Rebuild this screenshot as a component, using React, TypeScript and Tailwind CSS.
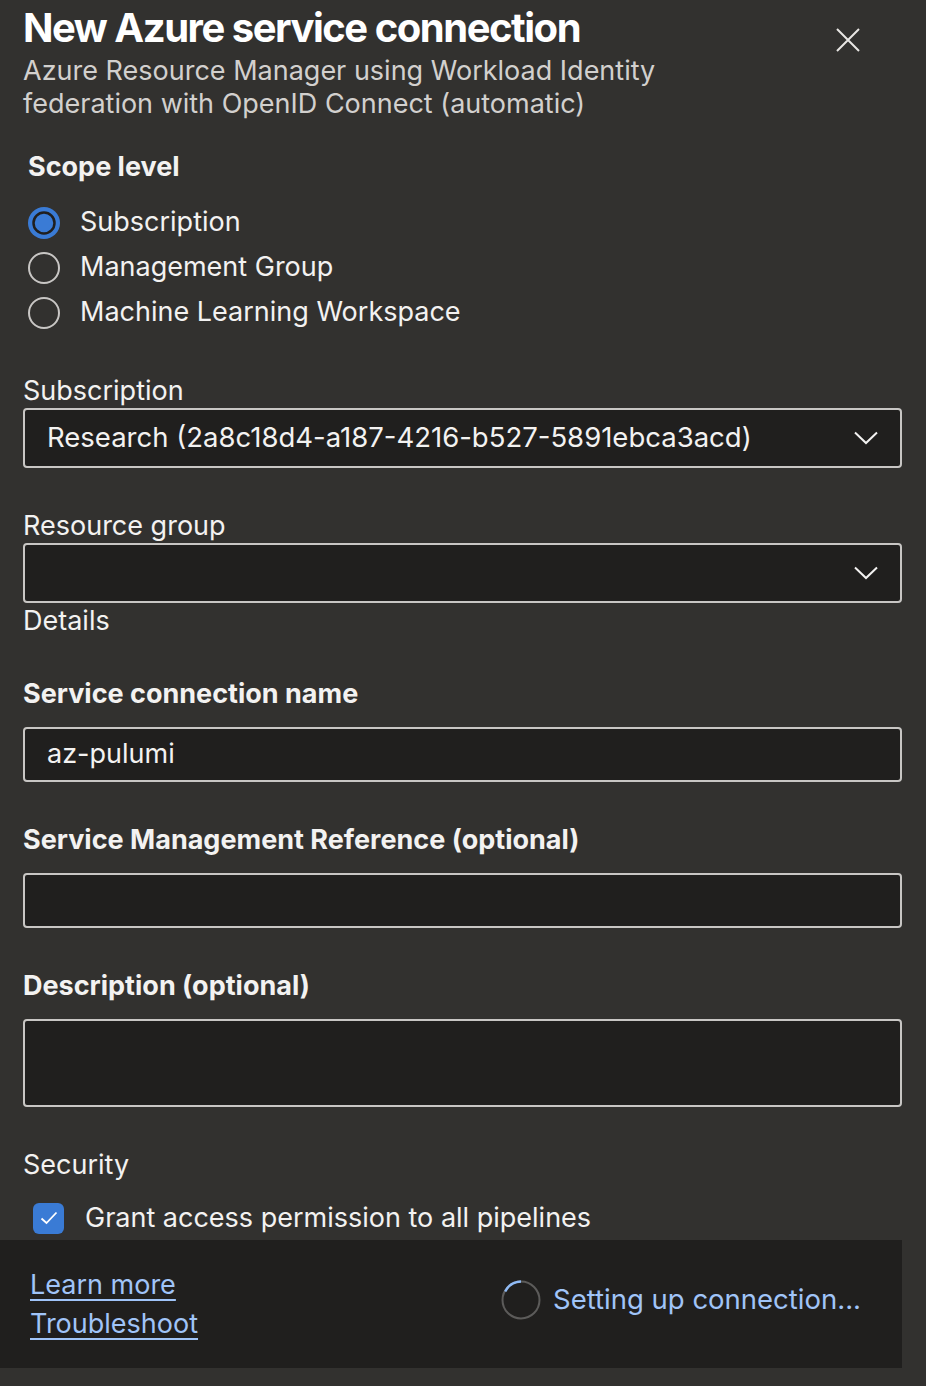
import React from 'react';

const font = { fontFamily: 'Inter, "Noto Sans", sans-serif' };

const Chevron = () => (
  <svg width="24" height="14" viewBox="0 0 24 14" fill="none" className="shrink-0">
    <path d="M1 1.5 L12 12 L23 1.5" stroke="#f3f2f1" strokeWidth="2" />
  </svg>
);

const Radio: React.FC<{ checked?: boolean; label: string }> = ({ checked, label }) => (
  <div className="flex items-center h-[45px] pl-[28px]">
    {checked ? (
      <svg width="32" height="32" viewBox="0 0 32 32" className="shrink-0">
        <circle cx="16" cy="16" r="16" fill="#3a7bd5" />
        <circle cx="16" cy="16" r="10.5" fill="#3a7bd5" stroke="#201f1e" strokeWidth="2.5" />
      </svg>
    ) : (
      <span className="w-[32px] h-[32px] rounded-full border-2 border-[#c8c6c4] shrink-0" />
    )}
    <span className="ml-[20px] text-[27px] text-[#f3f2f1]">{label}</span>
  </div>
);

const Label: React.FC<{ bold?: boolean; className?: string; children: React.ReactNode }> = ({ bold, className = '', children }) => (
  <div className={`leading-[34px] text-[27px] text-[#f3f2f1] ${bold ? 'font-bold' : ''} ${className}`}>{children}</div>
);

export default function App() {
  return (
    <div className="min-h-screen w-full bg-[#32312f]" style={font}>
      <div className="w-[902px]">
        <div className="relative pl-[23px]">
          <h1 className="h-[54px] leading-[56px] text-[40px] font-bold tracking-[-0.037em] text-white">
            New Azure service connection
          </h1>
          <p className="leading-[33px] text-[27px] text-[#d2d0ce] w-[660px]">
            Azure Resource Manager using Workload Identity federation with OpenID Connect (automatic)
          </p>
          <button className="absolute right-[42px] top-[28px] p-0">
            <svg width="24" height="24" viewBox="0 0 24 24" fill="none">
              <path d="M1 1 L23 23 M23 1 L1 23" stroke="#e8e6e4" strokeWidth="2" />
            </svg>
          </button>
        </div>

        <div className="pl-[28px] mt-[30px]">
          <Label bold>Scope level</Label>
        </div>
        <div className="mt-[16px]">
          <Radio checked label="Subscription" />
          <Radio label="Management Group" />
          <Radio label="Machine Learning Workspace" />
        </div>

        <div className="pl-[23px]">
          <Label className="mt-[39px]">Subscription</Label>
          <div className="h-[60px] flex items-center justify-between rounded-[4px] border-2 border-[#c8c6c4] bg-[#201f1e] pl-[22px] pr-[22px]">
            <span className="text-[27.5px] text-[#f3f2f1]">Research (2a8c18d4-a187-4216-b527-5891ebca3acd)</span>
            <Chevron />
          </div>

          <Label className="mt-[41px]">Resource group</Label>
          <div className="h-[60px] flex items-center justify-end rounded-[4px] border-2 border-[#c8c6c4] bg-[#201f1e] pr-[22px]">
            <Chevron />
          </div>

          <Label className="mt-[1px]">Details</Label>

          <Label bold className="mt-[39px]">Service connection name</Label>
          <div className="mt-[16px] h-[55px] flex items-center rounded-[4px] border-2 border-[#c8c6c4] bg-[#201f1e] pl-[22px]">
            <span className="text-[27px] text-[#f3f2f1]">az-pulumi</span>
          </div>

          <Label bold className="mt-[41px]">Service Management Reference (optional)</Label>
          <div className="mt-[16px] h-[55px] rounded-[4px] border-2 border-[#c8c6c4] bg-[#201f1e]" />

          <Label bold className="mt-[41px]">Description (optional)</Label>
          <div className="mt-[16px] h-[88px] rounded-[4px] border-2 border-[#c8c6c4] bg-[#201f1e]" />

          <Label className="mt-[41px]">Security</Label>
          <div className="mt-[19px] h-[34px] flex items-center pl-[10px]">
            <span className="w-[31px] h-[31px] rounded-[6px] bg-[#3a7bd5] flex items-center justify-center shrink-0">
              <svg width="18" height="14" viewBox="0 0 18 14" fill="none">
                <path d="M1.5 7.5 L6.5 12 L16.5 1.5" stroke="white" strokeWidth="1.8" />
              </svg>
            </span>
            <span className="ml-[21px] text-[27px] text-[#f3f2f1]">Grant access permission to all pipelines</span>
          </div>
        </div>

        <div className="mt-[5px] h-[128px] bg-[#201f1e] flex justify-between pl-[30px] pr-[41px]">
          <div className="pt-[25px] flex flex-col">
            <a href="#" className="leading-[39px] text-[27px] text-[#a0c4f8] underline underline-offset-[5px] decoration-[2px]">Learn more</a>
            <a href="#" className="leading-[39px] text-[27px] text-[#a0c4f8] underline underline-offset-[5px] decoration-[2px]">Troubleshoot</a>
          </div>
          <div className="pt-[40px] h-[80px] flex items-center">
            <svg width="40" height="40" viewBox="0 0 40 40" fill="none" className="shrink-0">
              <circle cx="20" cy="20" r="18.5" stroke="#5c5b5a" strokeWidth="2" />
              <path d="M4.2 11.5 A18.5 18.5 0 0 1 20 1.5" stroke="#8fbaf5" strokeWidth="2.5" />
            </svg>
            <span className="ml-[12px] text-[27.5px] text-[#a0c4f8]">Setting up connection...</span>
          </div>
        </div>
      </div>
    </div>
  );
}
